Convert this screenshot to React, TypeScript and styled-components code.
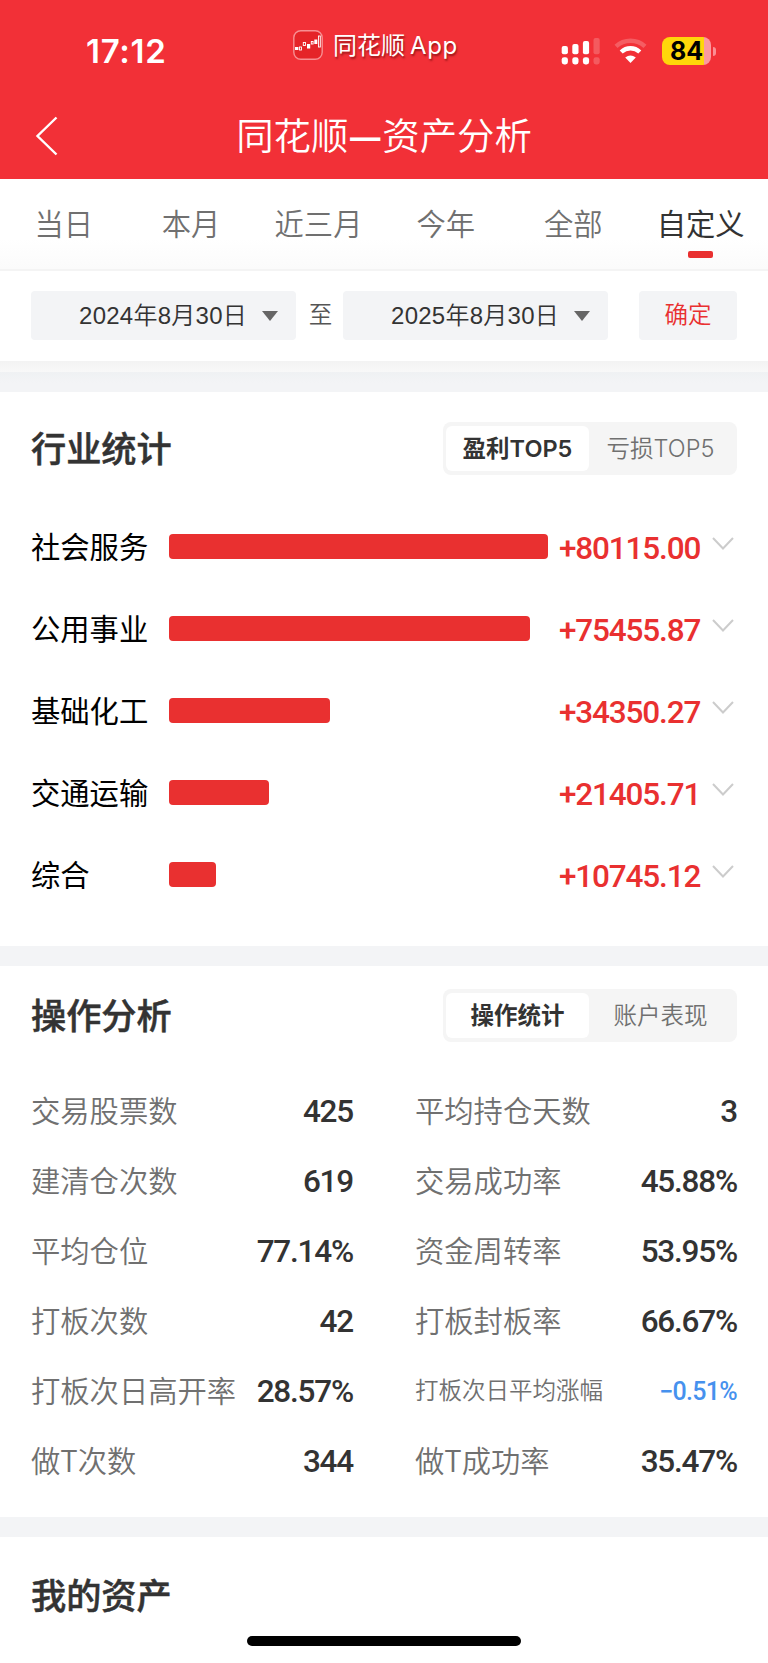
import React from 'react';
import styled, { createGlobalStyle } from 'styled-components';

const GlobalStyle = createGlobalStyle`
  * { box-sizing: border-box; }
  body {
    margin: 0;
    background: #fff;
    font-family: 'Noto Sans CJK SC', sans-serif;
    font-weight: 350;
    color: #333;
  }
`;

const Screen = styled.div`
  position: relative;
  width: 768px;
  height: 1663px;
  overflow: hidden;
  background: #fff;
  white-space: nowrap;
`;

const Header = styled.header`
  height: 179px;
  background: #f23037;
  color: #fff;
`;

const StatusBar = styled.div`
  display: flex;
  height: 92px;
  padding: 29px 51px 0 86px;
`;

const Clock = styled.div`
  width: 207px;
  height: 44px;
  font: 600 33px/44px Inter, sans-serif;
  letter-spacing: 0.7px;
`;

const AppBadge = styled.div`
  display: flex;
  align-items: center;
  gap: 10px;
  width: 268px;
  height: 32px;
  font-weight: 400;
  font-size: 24px;
  text-shadow: 1px 2px 2px rgba(80, 0, 0, 0.55);
`;

const AppName = styled.span`
  padding-bottom: 4px;
`;

const AppLatin = styled.span`
  margin-left: 5px;
  font-family: Inter, sans-serif;
  font-size: 24px;
  letter-spacing: 0.6px;
`;

const StatusIcons = styled.div`
  display: flex;
  align-items: flex-start;
  padding-top: 8px;
`;

const Signal = styled.svg`
  margin-right: 14px;
`;

const Wifi = styled.svg`
  margin-right: 15px;
`;

const Battery = styled.div`
  width: 49px;
  height: 28px;
  border-radius: 8px;
  background: linear-gradient(to right, #ffd60a 42px, #fb9aa0 42px);
  color: #000;
  text-align: center;
  font: 700 25px/28px Inter, sans-serif;
`;

const BatteryTip = styled.div`
  width: 3px;
  height: 9px;
  margin: 10px 0 0 2px;
  border-radius: 0 4px 4px 0;
  background: #fb8e94;
`;

const NavBar = styled.div`
  display: flex;
  align-items: center;
  height: 88px;
  padding-left: 34px;
`;

const PageTitle = styled.h1`
  flex: 1;
  margin: 0;
  padding: 0 58px 4px 0;
  text-align: center;
  font-weight: 350;
  font-size: 37.4px;
  line-height: 84px;
`;

const Dash = styled.span`
  font-weight: 700;
`;

const Tabs = styled.nav`
  display: grid;
  grid-template-columns: repeat(6, 127.4px);
  height: 92px;
  border-bottom: 2px solid #f4f4f4;
  background: linear-gradient(#fff 60px, #fbfbfb);
`;

const Tab = styled.div<{ $active?: boolean }>`
  display: flex;
  flex-direction: column;
  align-items: center;
  padding-top: 21px;
  font-size: 29.3px;
  line-height: 44px;
  color: ${(p) => (p.$active ? '#333' : '#707070')};
  font-weight: ${(p) => (p.$active ? 400 : 350)};
`;

const TabMark = styled.i`
  width: 25px;
  height: 7px;
  margin-top: 7px;
  border-radius: 2px;
  background: #e93030;
`;

const Filters = styled.div`
  display: flex;
  height: 90px;
  padding: 20px 31px 0;
`;

const DateField = styled.div`
  display: flex;
  align-items: center;
  justify-content: flex-end;
  gap: 15px;
  width: 265px;
  height: 49px;
  padding-right: 18px;
  border-radius: 4px;
  background: #f3f4f6;
`;

const DateText = styled.span`
  font-family: 'Liberation Sans', 'Noto Sans CJK SC', sans-serif;
  font-size: 24px;
  line-height: 48px;
  letter-spacing: 0.25px;
`;

const Caret = styled.i`
  border: 8px solid transparent;
  border-top: 10px solid #666;
  border-bottom: 0;
`;

const Between = styled.span`
  width: 47px;
  padding-left: 2px;
  text-align: center;
  font-size: 23.5px;
  line-height: 45px;
  color: #555;
`;

const Confirm = styled.button`
  width: 98px;
  height: 49px;
  margin-left: 31px;
  padding: 0 0 5px;
  border: 0;
  border-radius: 4px;
  background: #f3f4f6;
  color: #e93030;
  font-family: inherit;
  font-size: 23.5px;
  font-weight: 350;
`;

const Shade = styled.div`
  height: 31px;
  background: linear-gradient(#f3f3f3, #f8f8f8 11px, #eff1f3 11px, #f3f4f6 22px);
`;

const Gap = styled.div`
  height: 20px;
  background: #f3f4f6;
`;

const Section = styled.section<{ $height: number }>`
  height: ${(p) => p.$height}px;
  padding: 0 31px;
`;

const SectionHead = styled.div<{ $top: number }>`
  display: flex;
  justify-content: space-between;
  padding-top: ${(p) => p.$top}px;
`;

const SectionTitle = styled.h2`
  margin: 0;
  font-size: 35.2px;
  line-height: 49px;
  font-weight: 500;
  -webkit-text-stroke: 0.5px currentColor;
`;

const Segment = styled.div`
  display: flex;
  width: 294px;
  height: 53px;
  padding: 4px 3px;
  border-radius: 8px;
  background: #f5f5f5;
`;

const SegmentItem = styled.div<{ $active?: boolean }>`
  flex: 1;
  padding-right: ${(p) => (p.$active ? 0 : 2)}px;
  border-radius: 6px;
  background: ${(p) => (p.$active ? '#fff' : 'transparent')};
  color: ${(p) => (p.$active ? '#333' : '#707070')};
  font-family: Inter, 'Noto Sans CJK SC', sans-serif;
  font-weight: ${(p) => (p.$active ? 600 : 350)};
  font-size: 23.5px;
  line-height: 46px;
  text-align: center;
`;

const Bars = styled.div`
  padding-top: 30px;
`;

const BarRow = styled.div`
  display: grid;
  grid-template-columns: 138px 390px 153px 22px;
  align-items: center;
  height: 82px;
`;

const BarLabel = styled.span`
  padding-bottom: 2px;
  color: #000;
  font-size: 29.3px;
  font-weight: 400;
  line-height: 44px;
`;

const Bar = styled.div`
  height: 25px;
  border-radius: 4px;
  background: #e93030;
`;

const Amount = styled.span`
  padding-top: 4px;
  font-family: Roboto, sans-serif;
  font-weight: 500;
  font-size: 31.5px;
  letter-spacing: -1.15px;
  color: #e93030;
`;

const Chevron = styled.svg`
  margin-bottom: 4px;
`;

const Stats = styled.div`
  display: grid;
  grid-template-columns: 322px 322px;
  column-gap: 62px;
  padding-top: 34px;
`;

const Stat = styled.div<{ $small?: boolean }>`
  display: flex;
  align-items: center;
  justify-content: space-between;
  height: 70px;
  color: #707070;
  font-size: ${(p) => (p.$small ? 23.5 : 29.3)}px;
`;

const StatLabel = styled.span`
  padding-bottom: 4px;
`;

const StatValue = styled.span<{ $small?: boolean }>`
  font-family: Roboto, sans-serif;
  font-weight: 500;
  font-size: ${(p) => (p.$small ? 25 : 31.5)}px;
  letter-spacing: ${(p) => (p.$small ? -0.7 : -1.2)}px;
  color: ${(p) => (p.$small ? '#4691ee' : '#333')};
`;

const HomeIndicator = styled.div`
  position: absolute;
  left: 247px;
  bottom: 17px;
  width: 274px;
  height: 10px;
  border-radius: 5px;
  background: #000;
`;

const tabs = ['当日', '本月', '近三月', '今年', '全部', '自定义'];

const industries = [
  { name: '社会服务', width: 379, amount: '+80115.00' },
  { name: '公用事业', width: 361, amount: '+75455.87' },
  { name: '基础化工', width: 161, amount: '+34350.27' },
  { name: '交通运输', width: 100, amount: '+21405.71' },
  { name: '综合', width: 47, amount: '+10745.12' },
];

const stats: { label: string; value: string; small?: boolean }[] = [
  { label: '交易股票数', value: '425' },
  { label: '平均持仓天数', value: '3' },
  { label: '建清仓次数', value: '619' },
  { label: '交易成功率', value: '45.88%' },
  { label: '平均仓位', value: '77.14%' },
  { label: '资金周转率', value: '53.95%' },
  { label: '打板次数', value: '42' },
  { label: '打板封板率', value: '66.67%' },
  { label: '打板次日高开率', value: '28.57%' },
  { label: '打板次日平均涨幅', value: '−0.51%', small: true },
  { label: '做T次数', value: '344' },
  { label: '做T成功率', value: '35.47%' },
];

const AppLogo = () => (
  <svg width="30" height="30" viewBox="0 0 30 30" fill="none">
    <rect x="0.8" y="0.8" width="28.4" height="28.4" rx="7" fill="#e52428" stroke="#f78f92" strokeWidth="1.4" />
    <g fill="#fff">
      <rect x="2" y="17" width="3.4" height="3" />
      <rect x="14" y="14" width="3.2" height="4.5" />
      <rect x="21.300" y="9.500" width="3" height="4.5" />
    </g>
    <g stroke="#fff" strokeWidth="0.9">
      <rect x="6.5" y="17" width="2" height="3" />
      <rect x="10.3" y="12.500" width="2.2" height="3" />
      <rect x="18.300" y="11.500" width="1.800" height="2.500" />
      <rect x="25.500" y="6" width="1.800" height="11" />
    </g>
  </svg>
);

const SignalIcon = () => (
  <Signal width="39" height="28" viewBox="0 0 39 28" fill="#fff">
    {[0, 1, 2, 3].map((i) => {
      const top = [9, 7, 4, 1][i];
      return (
        <g key={i} opacity={i === 3 ? 0.2 : 1}>
          <rect x={0.7 + i * 10.6} y={top} width="6.2" height={17.2 - top} rx="2" />
          <rect x={0.7 + i * 10.6} y="20.2" width="6.2" height="7.2" rx="2.4" />
        </g>
      );
    })}
  </Signal>
);

const WifiIcon = () => (
  <Wifi width="33" height="27" viewBox="0 0 33 27" fill="none" stroke="#fff">
    <path d="M2 9.3C10.200 1.800 22.800 1.800 31 9.300" strokeWidth="4.400" opacity="0.22" />
    <path d="M7.200 15C12.600 10 20.400 10 25.800 15" strokeWidth="4.400" />
    <path d="M16.500 26L11.200 20.600Q16.500 16.400 21.800 20.600Z" fill="#fff" stroke="none" />
  </Wifi>
);

const BackIcon = () => (
  <svg width="24" height="40" viewBox="0 0 24 40" fill="none" stroke="#fff" strokeWidth="2.4">
    <path d="M22.500 1.500L3.500 20L22.500 38.500" />
  </svg>
);

const ChevronIcon = () => (
  <Chevron width="22" height="14" viewBox="0 0 22 14" fill="none" stroke="#ccc" strokeWidth="2">
    <path d="M1 1L11 11.500L21 1" />
  </Chevron>
);

export default function App() {
  return (
    <Screen>
      <GlobalStyle />
      <Header>
        <StatusBar>
          <Clock>17:12</Clock>
          <AppBadge>
            <AppLogo />
            <AppName>
              同花顺<AppLatin>App</AppLatin>
            </AppName>
          </AppBadge>
          <StatusIcons>
            <SignalIcon />
            <WifiIcon />
            <Battery>84</Battery>
            <BatteryTip />
          </StatusIcons>
        </StatusBar>
        <NavBar>
          <BackIcon />
          <PageTitle>
            同花顺<Dash>—</Dash>资产分析
          </PageTitle>
        </NavBar>
      </Header>
      <Tabs>
        {tabs.map((t, i) => (
          <Tab key={t} $active={i === 5}>
            {t}
            {i === 5 && <TabMark />}
          </Tab>
        ))}
      </Tabs>
      <Filters>
        <DateField>
          <DateText>2024年8月30日</DateText>
          <Caret />
        </DateField>
        <Between>至</Between>
        <DateField>
          <DateText>2025年8月30日</DateText>
          <Caret />
        </DateField>
        <Confirm>确定</Confirm>
      </Filters>
      <Shade />
      <Section $height={554}>
        <SectionHead $top={30}>
          <SectionTitle>行业统计</SectionTitle>
          <Segment>
            <SegmentItem $active>盈利TOP5</SegmentItem>
            <SegmentItem>亏损TOP5</SegmentItem>
          </Segment>
        </SectionHead>
        <Bars>
          {industries.map((r) => (
            <BarRow key={r.name}>
              <BarLabel>{r.name}</BarLabel>
              <Bar style={{ width: r.width }} />
              <Amount>{r.amount}</Amount>
              <ChevronIcon />
            </BarRow>
          ))}
        </Bars>
      </Section>
      <Gap />
      <Section $height={551}>
        <SectionHead $top={23}>
          <SectionTitle>操作分析</SectionTitle>
          <Segment>
            <SegmentItem $active>操作统计</SegmentItem>
            <SegmentItem>账户表现</SegmentItem>
          </Segment>
        </SectionHead>
        <Stats>
          {stats.map((s) => (
            <Stat key={s.label} $small={s.small}>
              <StatLabel>{s.label}</StatLabel>
              <StatValue $small={s.small}>{s.value}</StatValue>
            </Stat>
          ))}
        </Stats>
      </Section>
      <Gap />
      <Section $height={126}>
        <SectionHead $top={32}>
          <SectionTitle>我的资产</SectionTitle>
        </SectionHead>
      </Section>
      <HomeIndicator />
    </Screen>
  );
}
